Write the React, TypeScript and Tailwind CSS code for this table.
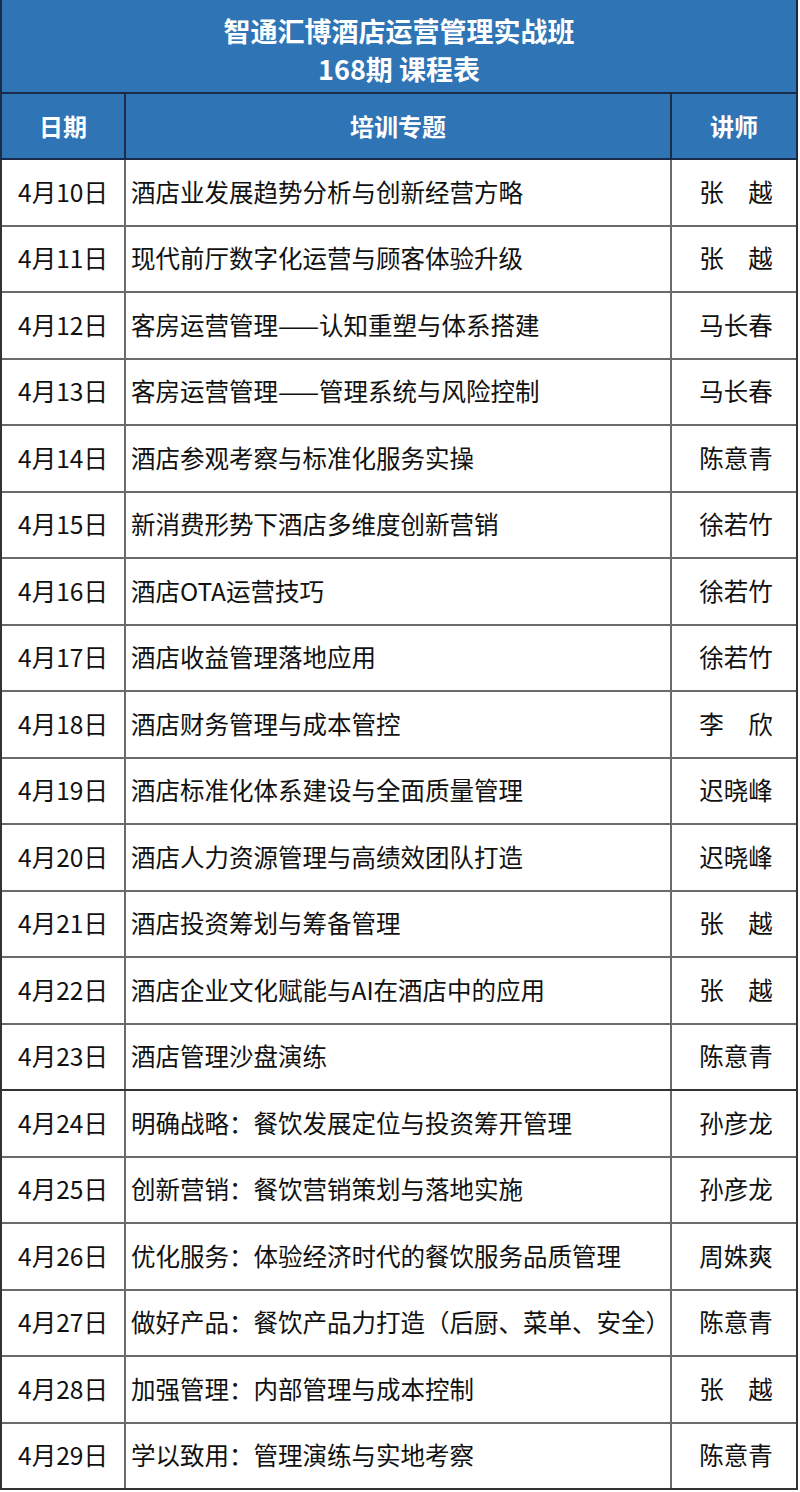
const rows: [string, string, string][] = [
  ['4月10日', '酒店业发展趋势分析与创新经营方略', '张　越'],
  ['4月11日', '现代前厅数字化运营与顾客体验升级', '张　越'],
  ['4月12日', '客房运营管理——认知重塑与体系搭建', '马长春'],
  ['4月13日', '客房运营管理——管理系统与风险控制', '马长春'],
  ['4月14日', '酒店参观考察与标准化服务实操', '陈意青'],
  ['4月15日', '新消费形势下酒店多维度创新营销', '徐若竹'],
  ['4月16日', '酒店OTA运营技巧', '徐若竹'],
  ['4月17日', '酒店收益管理落地应用', '徐若竹'],
  ['4月18日', '酒店财务管理与成本管控', '李　欣'],
  ['4月19日', '酒店标准化体系建设与全面质量管理', '迟晓峰'],
  ['4月20日', '酒店人力资源管理与高绩效团队打造', '迟晓峰'],
  ['4月21日', '酒店投资筹划与筹备管理', '张　越'],
  ['4月22日', '酒店企业文化赋能与AI在酒店中的应用', '张　越'],
  ['4月23日', '酒店管理沙盘演练', '陈意青'],
  ['4月24日', '明确战略：餐饮发展定位与投资筹开管理', '孙彦龙'],
  ['4月25日', '创新营销：餐饮营销策划与落地实施', '孙彦龙'],
  ['4月26日', '优化服务：体验经济时代的餐饮服务品质管理', '周姝爽'],
  ['4月27日', '做好产品：餐饮产品力打造（后厨、菜单、安全）', '陈意青'],
  ['4月28日', '加强管理：内部管理与成本控制', '张　越'],
  ['4月29日', '学以致用：管理演练与实地考察', '陈意青'],
];

export default function App() {
  return (
    <div
      className="w-[800px] h-[1492px] bg-white flex flex-col text-[#111]"
      style={{ fontFamily: '"Noto Sans CJK SC", "Microsoft YaHei", sans-serif' }}
    >
      <div className="h-[94px] shrink-0 bg-[#2f74b5] border-l-2 border-r-2 border-b-2 border-[#1b2a48] mr-[2px] flex flex-col items-center justify-center pt-[8px] text-white font-bold text-[27px] leading-[38px]">
        <div>智通汇博酒店运营管理实战班</div>
        <div>168期 课程表</div>
      </div>
      <div className="h-[66px] shrink-0 bg-[#2f74b5] mr-[2px] border-l-2 border-r-2 border-b-2 border-[#1b2a48] grid grid-cols-[124px_546px_1fr] text-white font-bold text-[24px]">
        <div className="flex items-center justify-center border-r-2 border-[#1b2a48]">日期</div>
        <div className="flex items-center justify-center border-r-2 border-[#1b2a48]">培训专题</div>
        <div className="flex items-center justify-center">讲师</div>
      </div>
      <div className="flex-1 flex flex-col mr-[2px] mb-[2px] border-l-2 border-r-2 border-b-2 border-[#333]">
        {rows.map(([date, topic, teacher], i) => (
          <div
            key={date}
            className={
              'flex-1 grid grid-cols-[124px_546px_1fr] text-[24.5px] ' +
              (i === rows.length - 1
                ? ''
                : i === 13
                ? 'border-b-2 border-[#333]'
                : 'border-b-2 border-[#6b6b6b]')
            }
          >
            <div className="flex items-center justify-center border-r-2 border-[#6b6b6b]">{date}</div>
            <div className="flex items-center pl-[5px] border-r-2 border-[#6b6b6b] whitespace-nowrap">{topic}</div>
            <div className="flex items-center justify-center pl-[4px]">{teacher}</div>
          </div>
        ))}
      </div>
    </div>
  );
}
